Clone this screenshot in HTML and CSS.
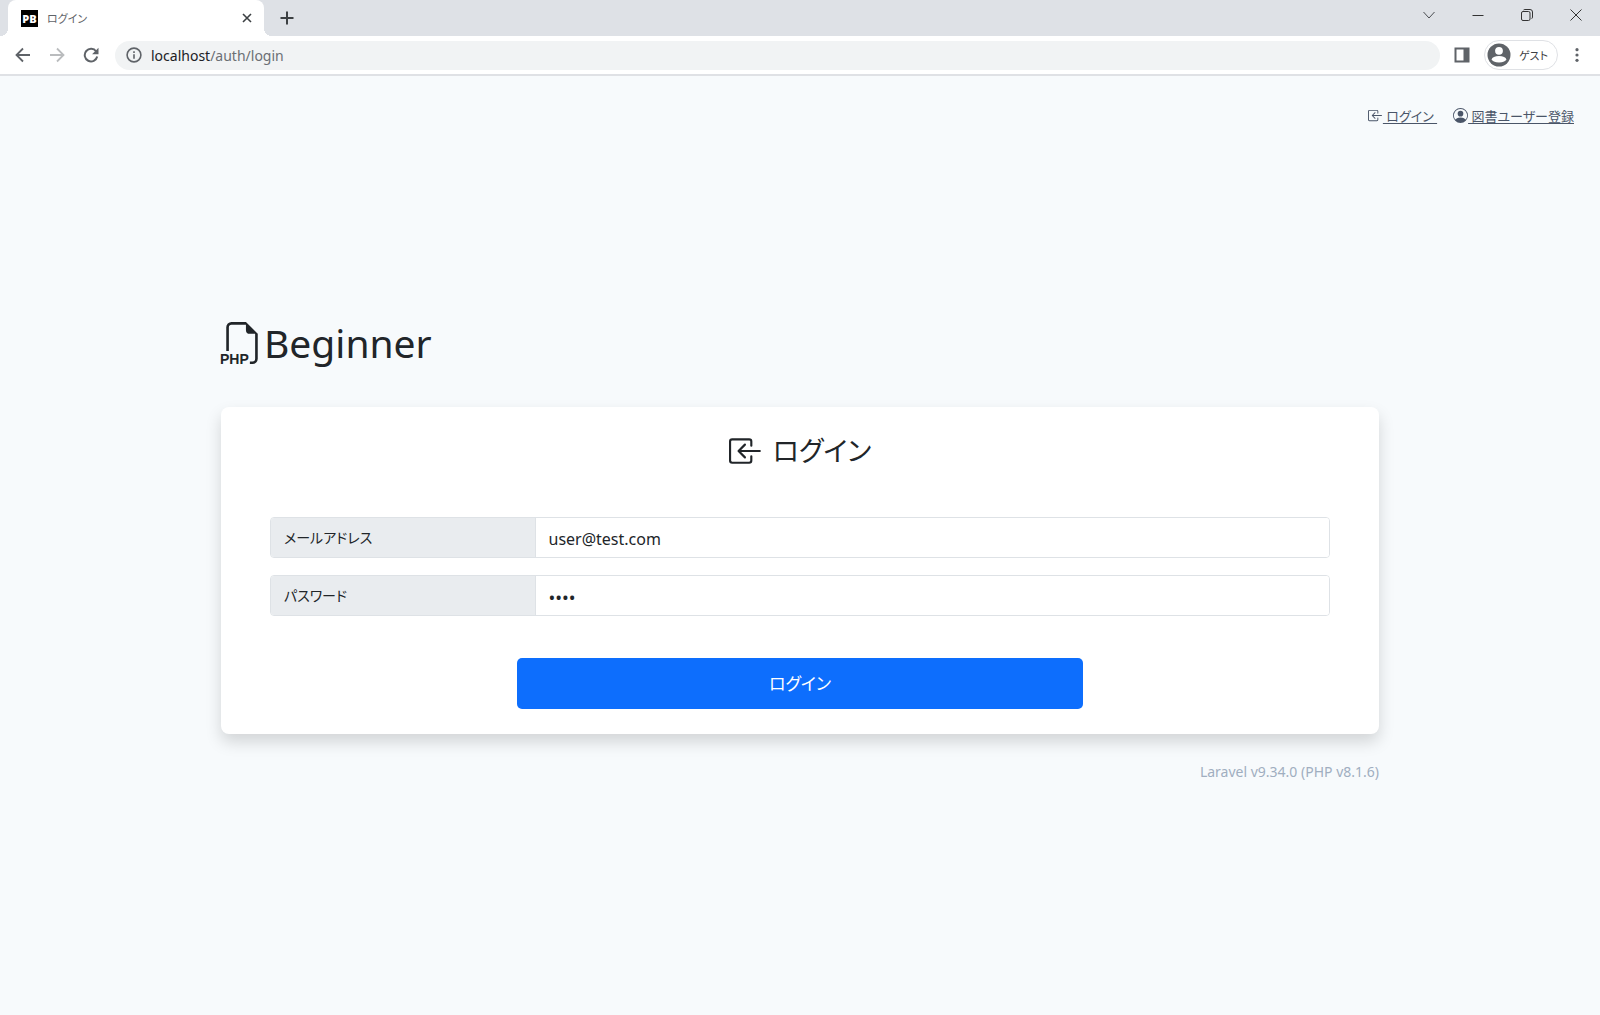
FILE: index.html
```html
<!DOCTYPE html>
<html lang="ja">
<head>
<meta charset="utf-8">
<meta name="viewport" content="width=device-width, initial-scale=1">
<title>ログイン</title>
<link rel="stylesheet" href="styles.css">
</head>
<body>
<svg class="defs" aria-hidden="true">
  <symbol id="box-arrow-in-left" viewBox="0 0 16 16">
    <path fill-rule="evenodd" d="M10 3.5a.5.5 0 0 0-.5-.5h-8a.5.5 0 0 0-.5.5v9a.5.5 0 0 0 .5.5h8a.5.5 0 0 0 .5-.5v-2a.5.5 0 0 1 1 0v2A1.5 1.5 0 0 1 9.500 14h-8A1.5 1.5 0 0 1 0 12.500v-9A1.5 1.5 0 0 1 1.500 2h8A1.5 1.5 0 0 1 11 3.500v2a.5.5 0 0 1-1 0v-2z"/>
    <path fill-rule="evenodd" d="M4.146 8.354a.5.5 0 0 1 0-.708l3-3a.5.5 0 1 1 .708.708L5.707 7.500H14.500a.5.5 0 0 1 0 1H5.707l2.147 2.146a.5.5 0 0 1-.708.708l-3-3z"/>
  </symbol>
</svg>
<header class="browser">
  <div class="tab-strip">
    <div class="tab">
      <span class="favicon">PB</span>
      <span class="tab-title">ログイン</span>
      <button class="icon-button tab-close" aria-label="タブを閉じる"><svg width="10" height="10" viewBox="0 0 10 10" stroke="#3c4043" stroke-width="1.600"><path d="M1 1l8 8M9 1l-8 8"/></svg></button>
    </div>
    <button class="icon-button new-tab" aria-label="新しいタブ"><svg width="14" height="14" viewBox="0 0 14 14" stroke="#3c4043" stroke-width="2"><path d="M7 .5v13M.5 7h13"/></svg></button>
    <div class="window-controls">
      <button class="icon-button" aria-label="タブを検索"><svg width="12" height="12" viewBox="0 0 12 12" fill="none" stroke="#4a4d51"><path d="M.5 3l5.500 6 5.500-6"/></svg></button>
      <button class="icon-button" aria-label="最小化"><svg width="12" height="12" viewBox="0 0 12 12" stroke="#333"><path d="M.5 6.500h11"/></svg></button>
      <button class="icon-button" aria-label="元に戻す"><svg width="12" height="12" viewBox="0 0 12 12" fill="none" stroke="#333"><rect x=".5" y="2.500" width="8.500" height="9" rx="1.500"/><path d="M2.500 1q.5-.5 1.500-.5h5q2.500 0 2.500 2.500v5q0 1-.8 1.700"/></svg></button>
      <button class="icon-button" aria-label="閉じる"><svg width="12" height="12" viewBox="0 0 12 12" stroke="#333"><path d="M.5.5l11 11M11.500.5l-11 11"/></svg></button>
    </div>
  </div>
  <div class="toolbar">
    <button class="icon-button nav-button" aria-label="戻る"><svg width="16" height="16" viewBox="0 0 16 16" fill="none" stroke="#5f6368" stroke-width="1.800"><path d="M15 8H2M8 1.500L1.500 8 8 14.500"/></svg></button>
    <button class="icon-button nav-button" aria-label="進む"><svg width="16" height="16" viewBox="0 0 16 16" fill="none" stroke="#babcbe" stroke-width="1.800"><path d="M1 8h13M8 1.500L14.500 8 8 14.500"/></svg></button>
    <button class="icon-button nav-button" aria-label="再読み込み"><svg width="16" height="16" viewBox="0 0 16 16"><path d="M13.200 4.500A6.300 6.300 0 1 0 14.200 9.500" fill="none" stroke="#5f6368" stroke-width="2"/><path d="M15.500.8v6.400H9.100z" fill="#5f6368"/></svg></button>
    <div class="address">
      <svg width="16" height="16" viewBox="0 0 16 16" fill="none" stroke="#5f6368" stroke-width="1.600"><circle cx="8" cy="8" r="6.900"/><path d="M8 7.200v4.600M8 4.200v1.700"/></svg>
      <span class="address-text" role="textbox" aria-label="アドレス">localhost<span class="path">/auth/login</span></span>
    </div>
    <button class="icon-button side-panel" aria-label="サイドパネル"><svg width="16" height="16" viewBox="0 0 16 16"><path fill="#5f6368" fill-rule="evenodd" d="M.5.5h15v15H.5zM2.500 2.500v11h7v-11z"/></svg></button>
    <button class="profile">
      <svg width="24" height="24" viewBox="0 0 24 24"><circle cx="12" cy="12" r="11.500" fill="#5f6368"/><circle cx="12" cy="7.800" r="3.900" fill="#fff"/><ellipse cx="12" cy="16.300" rx="7.200" ry="3.200" fill="#fff"/></svg>
      <span>ゲスト</span>
    </button>
    <button class="icon-button menu" aria-label="メニュー"><svg width="4" height="14" viewBox="0 0 4 14" fill="#5f6368"><circle cx="2" cy="1.700" r="1.600"/><circle cx="2" cy="7" r="1.600"/><circle cx="2" cy="12.300" r="1.600"/></svg></button>
  </div>
</header>
<div class="page">
  <nav class="page-nav">
    <a href="#login"><svg class="nav-icon"><use href="#box-arrow-in-left"/></svg>&nbsp;ログイン&nbsp;</a>
    <a href="#register"><svg class="nav-icon" viewBox="0 0 16 16"><path d="M11 6a3 3 0 1 1-6 0 3 3 0 0 1 6 0z"/><path fill-rule="evenodd" d="M0 8a8 8 0 1 1 16 0A8 8 0 0 1 0 8zm8-7a7 7 0 0 0-5.468 11.370C3.242 11.226 4.805 10 8 10s4.757 1.225 5.468 2.370A7 7 0 0 0 8 1z"/></svg>&nbsp;図書ユーザー登録</a>
  </nav>
  <main class="content">
    <h1 class="brand">
      <svg class="brand-icon" viewBox="0 0 42 42"><path transform="scale(2.625)" fill-rule="evenodd" d="M14 4.500V14a2 2 0 0 1-2 2h-1v-1h1a1 1 0 0 0 1-1V4.500h-2A1.500 1.500 0 0 1 9.500 3V1H4a1 1 0 0 0-1 1v9H2V2a2 2 0 0 1 2-2h5.500L14 4.500Z"/><text class="brand-type" x="-1" y="42">PHP</text></svg>
      <span>Beginner</span>
    </h1>
    <form class="card" id="login">
      <h2 class="card-title"><svg class="title-icon"><use href="#box-arrow-in-left"/></svg><span>ログイン</span></h2>
      <div class="field">
        <label for="email">メールアドレス</label>
        <input id="email" type="email" value="user@test.com">
      </div>
      <div class="field">
        <label for="password">パスワード</label>
        <input id="password" type="password" value="pass">
      </div>
      <button class="submit" type="submit">ログイン</button>
    </form>
    <footer class="version">Laravel v9.34.0 (PHP v8.1.6)</footer>
  </main>
</div>
</body>
</html>
```
FILE: styles.css
```css
*, *::before, *::after {
  box-sizing: border-box;
}

body {
  margin: 0;
  min-height: 100vh;
  display: flex;
  flex-direction: column;
  background: #f7fafc;
  color: #212529;
  font-family: "Noto Sans", "Noto Sans CJK JP", sans-serif;
  font-size: 16px;
  line-height: 24px;
  font-feature-settings: "palt";
}

button,
input {
  font: inherit;
  font-feature-settings: inherit;
  color: inherit;
}

svg {
  flex: none;
}

.defs {
  position: absolute;
  width: 0;
  height: 0;
}

.icon-button {
  display: flex;
  align-items: center;
  justify-content: center;
  padding: 0;
  border: 0;
  background: none;
}

/* Browser frame */
.tab-strip {
  display: flex;
  height: 36px;
  padding-left: 8px;
  background: #dee1e6;
}

.tab {
  position: relative;
  display: flex;
  align-items: center;
  width: 256px;
  padding: 0 11px 0 13px;
  border-radius: 8px 8px 0 0;
  background: #fff;
}

.tab::before,
.tab::after {
  content: "";
  position: absolute;
  bottom: 0;
  width: 8px;
  height: 8px;
}

.tab::before {
  right: 100%;
  background: radial-gradient(circle at 0 0, transparent 8px, #fff 8px);
}

.tab::after {
  left: 100%;
  background: radial-gradient(circle at 100% 0, transparent 8px, #fff 8px);
}

.favicon {
  width: 17px;
  height: 17px;
  background: #000;
  color: #fff;
  font: 800 11px/17px "Open Sans", sans-serif;
  text-align: center;
}

.tab-title {
  margin-left: 9px;
  padding-top: 1px;
  color: #5f6368;
  font-size: 11px;
}

.tab-close {
  width: 12px;
  height: 20px;
  margin-left: auto;
}

.new-tab {
  width: 46px;
}

.window-controls {
  display: flex;
  height: 30px;
  margin-left: auto;
}

.window-controls .icon-button {
  width: 49px;
}

.toolbar {
  display: flex;
  align-items: center;
  height: 40px;
  padding: 0 16px 0 6px;
  background: #fff;
  border-bottom: 2px solid #dfe1e5;
}

.nav-button {
  width: 34px;
  height: 30px;
}

.address {
  flex: 1;
  display: flex;
  align-items: center;
  gap: 9px;
  height: 29px;
  margin-left: 7px;
  padding: 0 11px;
  border-radius: 15px;
  background: #f1f3f4;
}

.address-text {
  padding-top: 2px;
  font: 14px/20px "Noto Sans", sans-serif;
  color: #202124;
}

.address .path {
  color: #6b6f74;
}

.side-panel {
  width: 44px;
}

.profile {
  display: flex;
  align-items: center;
  gap: 8px;
  height: 30px;
  margin-right: 12px;
  padding: 0 9px 0 2px;
  border: 1px solid #dfe1e5;
  border-radius: 15px;
  background: #fff;
  color: #3c4043;
  font-size: 11px;
}

.profile span {
  padding-top: 2px;
}

.menu {
  width: 14px;
}

/* Page */
.page {
  flex: 1;
  display: flex;
  flex-direction: column;
}

.page-nav {
  display: flex;
  justify-content: flex-end;
  gap: 16px;
  padding: 28px 26px 0;
}

.page-nav a {
  color: #4a5568;
  font-size: 13px;
  text-decoration: underline;
  text-underline-offset: 2px;
}

.nav-icon {
  width: 15px;
  height: 15px;
  fill: currentColor;
  vertical-align: -2px;
}

.content {
  width: 100%;
  max-width: 1158px;
  margin: auto;
  padding-bottom: 44px;
}

.brand {
  display: flex;
  align-items: center;
  gap: 1px;
  margin: 0 0 36px;
  font-size: 39px;
  font-weight: 400;
  line-height: 56px;
}

.brand-icon {
  width: 42px;
  height: 42px;
  fill: currentColor;
  overflow: visible;
}

.brand-type {
  font: bold 14px "Liberation Sans", sans-serif;
}

.card {
  display: flex;
  flex-direction: column;
  padding: 24px 49px 25px;
  border-radius: 8px;
  background: #fff;
  box-shadow: 0 8px 16px rgba(0, 0, 0, 0.15);
}

.card-title {
  display: flex;
  align-items: center;
  justify-content: center;
  gap: 10px;
  margin: 0 0 46px;
  font-size: 27px;
  font-weight: 400;
  line-height: 40px;
}

.title-icon {
  width: 34px;
  height: 34px;
  fill: currentColor;
}

.field {
  display: flex;
  height: 41px;
  margin-bottom: 17px;
  border: 1px solid #dee2e6;
  border-radius: 4px;
  overflow: hidden;
}

.field label {
  width: 25%;
  padding: 8px 13px;
  border-right: 1px solid #dee2e6;
  background: #e9ecef;
  font-size: 14px;
}

.field input {
  flex: 1;
  min-width: 0;
  padding: 2px 13px 0;
  border: 0;
  background: #fff;
}

.field input[type="password"] {
  font-size: 18px;
}

.submit {
  align-self: center;
  width: 566px;
  max-width: 100%;
  height: 51px;
  margin-top: 25px;
  padding: 0;
  border: 0;
  border-radius: 5px;
  background: #0d6efd;
  color: #fff;
  font-size: 17px;
}

.version {
  margin-top: 26px;
  color: #a0aec0;
  font-size: 14px;
  text-align: right;
}
```
